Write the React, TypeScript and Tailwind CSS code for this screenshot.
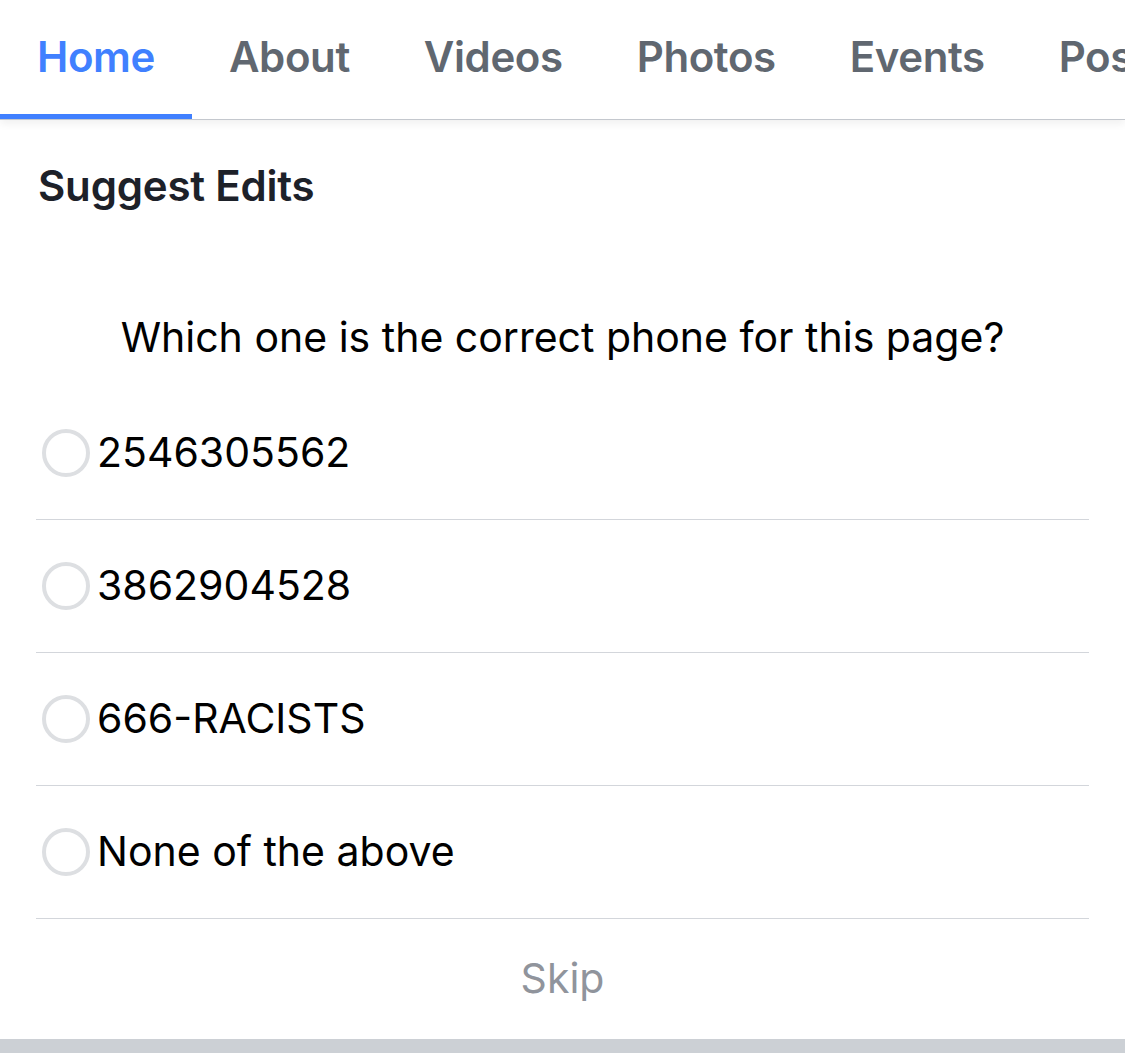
import React from "react";

const tabs = ["Home", "About", "Videos", "Photos", "Events", "Posts"];
const options = ["2546305562", "3862904528", "666-RACISTS", "None of the above"];

export default function App() {
  return (
    <div className="w-[1125px] h-[1053px] bg-white overflow-hidden flex flex-col font-['Inter','Noto_Sans',sans-serif]">
      {/* Tab bar */}
      <nav className="relative h-[120px] shrink-0 flex border-b border-[#c4c8ce] whitespace-nowrap overflow-hidden shadow-[0_4px_8px_rgba(0,0,0,0.06)]">
        {tabs.map((t, i) => (
          <div
            key={t}
            className={
              "relative shrink-0 flex items-center px-[37px] pb-[6px] text-[42px] font-semibold tracking-[-0.4px] " +
              (i === 0 ? "text-[#4080ff]" : "text-[#606770]")
            }
          >
            {t}
            {i === 0 && <span className="absolute left-0 right-0 bottom-[-1px] h-[6px] bg-[#4080ff]" />}
          </div>
        ))}
      </nav>

      {/* Suggest Edits card */}
      <section className="flex-1 flex flex-col px-[36px]">
        <h2 className="mt-[44px] pl-[2px] text-[42px] leading-[44px] font-semibold text-[#1d2129] tracking-[-0.2px]">Suggest Edits</h2>
        <p className="mt-[105px] text-center text-[41px] leading-[48px] text-black">
          Which one is the correct phone for this page?
        </p>
        <div className="mt-[26px] flex flex-col">
          {options.map((o) => (
            <label key={o} className="h-[133px] flex items-center border-b border-[#d3d6db] cursor-pointer">
              <span className="ml-[6px] w-[48px] h-[48px] rounded-full border-[4px] border-[#dddfe2] shrink-0" />
              <span className="ml-[7px] text-[41px] text-black">{o}</span>
            </label>
          ))}
        </div>
        <button className="h-[120px] text-[41px] text-[#90949c]">Skip</button>
      </section>
      <div className="h-[14px] bg-[#ccd0d5] shrink-0" />
    </div>
  );
}
